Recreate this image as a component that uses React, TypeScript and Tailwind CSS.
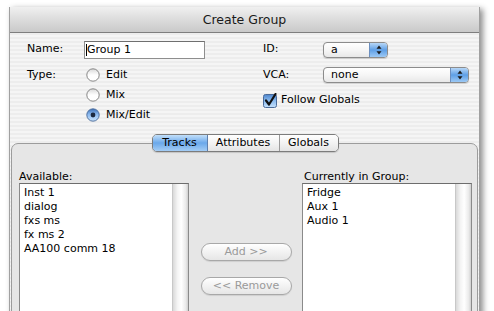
import React from "react";

const font = { fontFamily: '"DejaVu Sans", "Noto Sans", sans-serif' };

function Radio({ checked }: { checked?: boolean }) {
  return (
    <svg width="14" height="14" viewBox="0 0 14 14" className="shrink-0">
      <defs>
        <linearGradient id="rw" x1="0" y1="0" x2="0" y2="1">
          <stop offset="0" stopColor="#d8d8d8" />
          <stop offset="0.5" stopColor="#ffffff" />
          <stop offset="1" stopColor="#ffffff" />
        </linearGradient>
        <linearGradient id="rb" x1="0" y1="0" x2="0" y2="1">
          <stop offset="0" stopColor="#3c6fb4" />
          <stop offset="0.45" stopColor="#8cbaf0" />
          <stop offset="1" stopColor="#c9e3fb" />
        </linearGradient>
      </defs>
      <circle cx="7" cy="7" r="6.2" fill={checked ? "url(#rb)" : "url(#rw)"} stroke={checked ? "#4a6a98" : "#7a7a7a"} strokeWidth="0.9" />
      {checked && <circle cx="7" cy="7" r="2.4" fill="#1c2a40" />}
    </svg>
  );
}

function Checkbox() {
  return (
    <svg width="14" height="15" viewBox="0 0 14 15" className="shrink-0">
      <defs>
        <linearGradient id="cb" x1="0" y1="0" x2="0" y2="1">
          <stop offset="0" stopColor="#4f86cc" />
          <stop offset="0.5" stopColor="#8cbcf0" />
          <stop offset="1" stopColor="#c6e1fb" />
        </linearGradient>
      </defs>
      <rect x="0.5" y="1.5" width="13" height="13" rx="2" fill="url(#cb)" stroke="#4a6a98" />
      <path d="M3 7.5 L6 11.5 L12.5 1" fill="none" stroke="#111" strokeWidth="2.2" strokeLinecap="round" strokeLinejoin="round" />
    </svg>
  );
}

function Popup({ value, width }: { value: string; width: string }) {
  return (
    <div className={`${width} h-[16px] flex rounded-[4px] border border-[#8c8c8c] overflow-hidden bg-gradient-to-b from-white via-[#f6f6f6] to-[#e8e8e8] shadow-[0_1px_1px_rgba(0,0,0,0.15)]`}>
      <div className="flex-1 pl-[7px] text-[11px] leading-[14px] text-black">{value}</div>
      <div className="w-[18px] border-l border-[#6c8fbf] bg-gradient-to-b from-[#b7d7f7] via-[#5e9fe6] to-[#9cc9f5] flex items-center justify-center">
        <svg width="6" height="10" viewBox="0 0 6 10">
          <path d="M3 0.5 L5.5 3.8 L0.5 3.8 Z" fill="#1a1a1a" />
          <path d="M3 9.5 L5.5 6.2 L0.5 6.2 Z" fill="#1a1a1a" />
        </svg>
      </div>
    </div>
  );
}

function ListBox({ items }: { items: string[] }) {
  return (
    <div className="w-[170px] h-[140px] flex border border-[#8a8a8a] border-t-[#6d6d6d] bg-white">
      <div className="flex-1 pt-[2px] pl-[4px]">
        {items.map((t) => (
          <div key={t} className="text-[11px] leading-[14px] text-black whitespace-nowrap">{t}</div>
        ))}
      </div>
      <div className="w-[16px] border-l border-[#c8c8c8] bg-[linear-gradient(90deg,#d9d9d9_0%,#f4f4f4_30%,#ffffff_55%,#eaeaea_85%,#cfcfcf_100%)]" />
    </div>
  );
}

function PillButton({ label }: { label: string }) {
  return (
    <div className="w-[91px] h-[18px] rounded-full border border-[#a8a8a8] bg-gradient-to-b from-white via-[#f2f2f2] to-[#e6e6e6] flex items-center justify-center text-[11px] leading-[14px] text-[#9a9a9a] shadow-[0_1px_1px_rgba(0,0,0,0.1)]">
      {label}
    </div>
  );
}

export default function App() {
  return (
    <div style={font} className="w-[494px] h-[311px] bg-white overflow-hidden">
      <div className="ml-[9px] mt-[7px] w-[471px] h-[330px] border-x border-[#a0a0a0] shadow-[3px_2px_6px_rgba(0,0,0,0.45)] flex flex-col">
        {/* title bar */}
        <div className="h-[26px] shrink-0 border-b border-[#7e7e7e] bg-gradient-to-b from-[#f0f0f0] via-[#dcdcdc] to-[#c9c9c9] flex items-center justify-center text-[12.5px] text-[#1a1a1a] pt-[1px]">
          Create Group
        </div>
        {/* content */}
        <div className="flex-1 bg-[repeating-linear-gradient(180deg,#ededed_0px,#ededed_2px,#f5f5f5_2px,#f5f5f5_4px)] flex flex-col">
          <div className="flex pt-[8px] h-[92px]">
            {/* left */}
            <div className="w-[250px] pl-[17px] flex flex-col">
              <div className="flex items-center h-[17px]">
                <div className="w-[57px] text-[11px] text-black">Name:</div>
                <div className="w-[121px] h-[18px] border border-[#8e8e8e] border-t-[#6f6f6f] bg-white text-[11px] leading-[15px] pl-[1px] text-black flex items-center">
                  <span className="w-px h-[12px] bg-black" />
                  Group 1
                </div>
              </div>
              <div className="mt-[7px] flex">
                <div className="w-[59px] text-[11px] text-black leading-[20px]">Type:</div>
                <div className="flex flex-col">
                  <div className="h-[20px] flex items-center gap-[6px] text-[11px] text-black"><Radio />Edit</div>
                  <div className="h-[20px] flex items-center gap-[6px] text-[11px] text-black"><Radio />Mix</div>
                  <div className="h-[20px] flex items-center gap-[6px] text-[11px] text-black"><Radio checked />Mix/Edit</div>
                </div>
              </div>
            </div>
            {/* right */}
            <div className="flex-1 pl-[3px] flex flex-col">
              <div className="flex items-center h-[17px]">
                <div className="w-[60px] text-[11px] text-black">ID:</div>
                <Popup value="a" width="w-[65px]" />
              </div>
              <div className="mt-[7px] h-[20px] flex items-center">
                <div className="w-[60px] text-[11px] text-black">VCA:</div>
                <Popup value="none" width="w-[146px]" />
              </div>
              <div className="mt-[5px] h-[20px] flex items-center gap-[4px] text-[11px] text-black">
                <Checkbox />
                Follow Globals
              </div>
            </div>
          </div>
          {/* tabs */}
          <div className="mt-[9px] flex justify-center relative z-10 pl-[1px]">
            <div className="flex h-[18px] rounded-[5px] border border-[#7c7c7c] overflow-hidden text-[11px] text-black shadow-[0_1px_1px_rgba(0,0,0,0.15)]">
              <div className="w-[55px] flex items-center justify-center bg-gradient-to-b from-[#c2dff9] via-[#6aa8ea] to-[#a4cdf5] border-r border-[#5d7fae]">Tracks</div>
              <div className="w-[72px] flex items-center justify-center bg-gradient-to-b from-white via-[#f3f3f3] to-[#e4e4e4] border-r border-[#9a9a9a]">Attributes</div>
              <div className="w-[58px] flex items-center justify-center bg-gradient-to-b from-white via-[#f3f3f3] to-[#e4e4e4]">Globals</div>
            </div>
          </div>
          <div className="-mt-[9px] mx-[1px] flex-1 rounded-t-[7px] border border-[#9c9c9c] bg-[#e6e6e6] pt-[27px] pl-[7px] pr-[5px]">
            <div className="flex">
              <div className="flex flex-col">
                <div className="text-[11px] leading-[12px] text-black">Available:</div>
                <ListBox items={["Inst 1", "dialog", "fxs ms", "fx ms 2", "AA100 comm 18"]} />
              </div>
              <div className="w-[113px] flex flex-col items-center pt-[72px] gap-[16px] pl-[1px]">
                <PillButton label="Add >>" />
                <PillButton label="<< Remove" />
              </div>
              <div className="flex flex-col">
                <div className="text-[11px] leading-[12px] text-black pl-[2px]">Currently in Group:</div>
                <ListBox items={["Fridge", "Aux 1", "Audio 1"]} />
              </div>
            </div>
          </div>
        </div>
      </div>
    </div>
  );
}
